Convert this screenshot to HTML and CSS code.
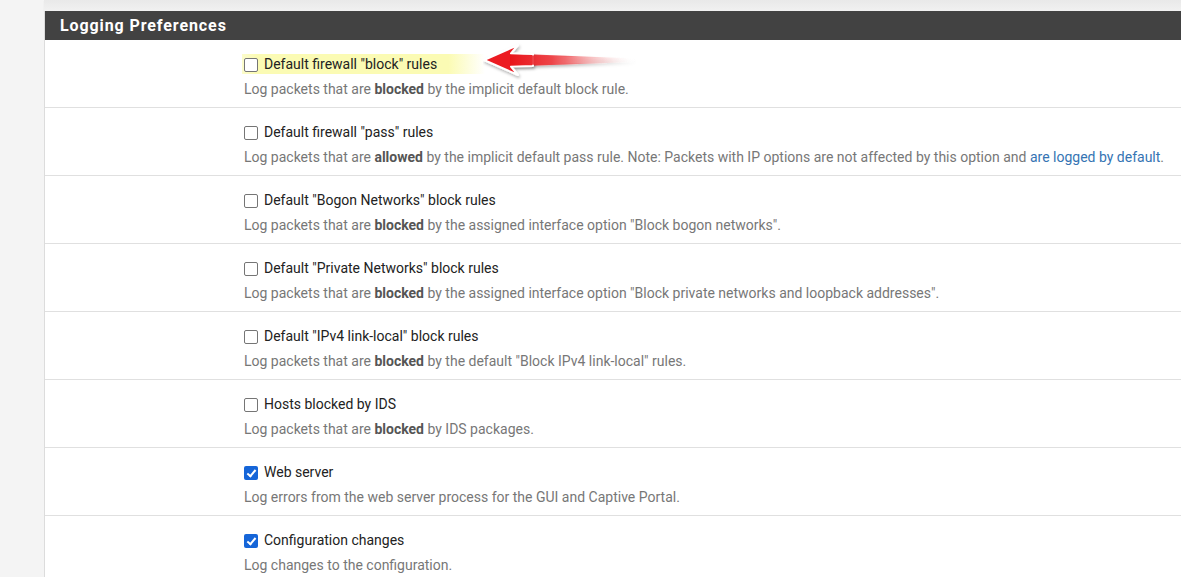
FILE: index.html
```html
<!DOCTYPE html>
<html lang="en">
<head>
    <meta charset="UTF-8">
    <title>Logging Preferences</title>
    <link rel="stylesheet" href="styles.css">
</head>
<body>
    <div class="topbar"></div>
    <div class="panel">
        <div class="panel-heading">Logging Preferences</div>

        <div class="row">
            <label class="check first">
                <span class="marker">
                    <span class="box"></span>
                    Default firewall "block" rules
                </span>
                <svg class="arrow" width="160" height="40" viewBox="0 0 160 40">
                    <defs>
                        <linearGradient id="shaft" x1="0" y1="0" x2="1" y2="0">
                            <stop offset="0" stop-color="#e8141a"/>
                            <stop offset="0.45" stop-color="#ee4448" stop-opacity="0.85"/>
                            <stop offset="1" stop-color="#ffffff" stop-opacity="0"/>
                        </linearGradient>
                        <filter id="shadow" x="-20%" y="-40%" width="140%" height="180%">
                            <feDropShadow dx="1" dy="2" stdDeviation="1.5" flood-color="#000" flood-opacity="0.3"/>
                        </filter>
                    </defs>
                    <path d="M26 13.5 L152 18.5 L152 22 L26 26.5 Z" fill="url(#shaft)" filter="url(#shadow)"/>
                    <path d="M1 20 L35 5 L28 13.5 L50 14 L50 26 L28 26.5 L35 35 Z" fill="#ec1c24" stroke="#fff" stroke-width="2" stroke-linejoin="round" filter="url(#shadow)"/>
                    <path d="M27 14.5 L120 18 L120 22.5 L27 25.5 Z" fill="url(#shaft)"/>
                </svg>
            </label>
            <p class="help">Log packets that are <b>blocked</b> by the implicit default block rule.</p>
        </div>

        <div class="row">
            <label class="check"><span class="box"></span>Default firewall "pass" rules</label>
            <p class="help">Log packets that are <b>allowed</b> by the implicit default pass rule. Note: Packets with IP options are not affected by this option and <a href="#">are logged by default</a>.</p>
        </div>

        <div class="row">
            <label class="check"><span class="box"></span>Default "Bogon Networks" block rules</label>
            <p class="help">Log packets that are <b>blocked</b> by the assigned interface option "Block bogon networks".</p>
        </div>

        <div class="row">
            <label class="check"><span class="box"></span>Default "Private Networks" block rules</label>
            <p class="help">Log packets that are <b>blocked</b> by the assigned interface option "Block private networks and loopback addresses".</p>
        </div>

        <div class="row">
            <label class="check"><span class="box"></span>Default "IPv4 link-local" block rules</label>
            <p class="help">Log packets that are <b>blocked</b> by the default "Block IPv4 link-local" rules.</p>
        </div>

        <div class="row">
            <label class="check"><span class="box"></span>Hosts blocked by IDS</label>
            <p class="help">Log packets that are <b>blocked</b> by IDS packages.</p>
        </div>

        <div class="row">
            <label class="check"><span class="box checked"></span>Web server</label>
            <p class="help">Log errors from the web server process for the GUI and Captive Portal.</p>
        </div>

        <div class="row">
            <label class="check"><span class="box checked"></span>Configuration changes</label>
            <p class="help">Log changes to the configuration.</p>
        </div>
    </div>
</body>
</html>
```

FILE: styles.css
```css
body {
    margin: 0;
    padding: 0 0 0 44px;
    font-family: Roboto, "Liberation Sans", sans-serif;
    font-size: 14px;
    background-color: #f4f4f4;
    color: #212121;
    overflow: hidden;
}

.topbar {
    height: 11px;
    background: linear-gradient(#e9e9e9, #f1f1f1);
    box-shadow: 0 1px 1px rgba(0, 0, 0, 0.08);
}

.panel {
    background-color: #ffffff;
    border-left: 1px solid #dcdcdc;
}

.panel-heading {
    height: 29px;
    line-height: 30px;
    padding-left: 15px;
    background-color: #424242;
    color: #ffffff;
    font-size: 16px;
    font-weight: bold;
    letter-spacing: 0.9px;
}

.row {
    height: 68px;
    padding: 14px 0 0 199px;
    box-sizing: border-box;
    border-bottom: 1px solid #e0e0e0;
}

.check {
    display: flex;
    align-items: center;
    height: 20px;
    line-height: 20px;
    color: #222222;
}

.first {
    position: relative;
}

.marker {
    display: flex;
    align-items: center;
    height: 20px;
    margin-left: -2px;
    padding: 0 48px 0 2px;
    background: linear-gradient(90deg, rgba(250, 250, 170, 0.6), #fbfbb4 6%, #fbfbb4 85%, rgba(251, 251, 180, 0));
}

.arrow {
    position: absolute;
    left: 239px;
    top: -14px;
}

.box {
    display: inline-block;
    width: 12px;
    height: 12px;
    margin-right: 6px;
    border: 1px solid #757575;
    border-radius: 2px;
    background-color: #ffffff;
    position: relative;
    top: 1px;
}

.box.checked {
    width: 14px;
    height: 14px;
    border: none;
    background-color: #1565d8;
}

.box.checked::after {
    content: "";
    position: absolute;
    left: 4.5px;
    top: 1.5px;
    width: 3px;
    height: 7px;
    border: solid #ffffff;
    border-width: 0 2px 2px 0;
    transform: rotate(40deg);
}

.help {
    margin: 5px 0 0 0;
    line-height: 20px;
    color: #777777;
    white-space: nowrap;
}

.help b {
    color: #555555;
}

.help a {
    color: #3574b3;
    text-decoration: none;
}
```
